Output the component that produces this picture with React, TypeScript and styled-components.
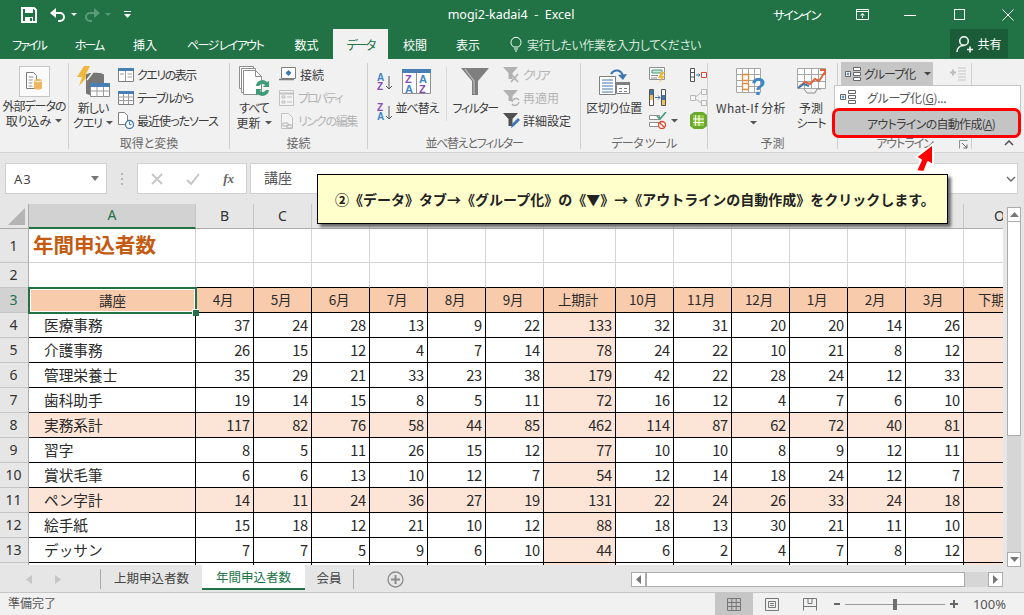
import React from 'react';
import styled, { createGlobalStyle } from 'styled-components';

const GREEN = '#217346';
const JP = '"Noto Sans CJK JP", "Noto Sans", sans-serif';

const GlobalStyle = createGlobalStyle`
    html, body { margin: 0; padding: 0; background: #e6e6e6; }
    * { box-sizing: border-box; }
`;

const App = () => (
    <Root>
        <GlobalStyle />
        <TitleBar>
            <Qat>
                <SaveIcon />
                <UndoIcon />
                <WhiteCaret />
                <RedoIcon />
                <DimCaret />
                <CustomizeIcon />
            </Qat>
            <WindowTitle>mogi2-kadai4&nbsp; - &nbsp;Excel</WindowTitle>
            <WindowControls>
                <SignIn>サインイン</SignIn>
                <WinButton $w={60}><RibbonDisplayIcon /></WinButton>
                <WinButton $w={36}><svg width="12" height="12"><path d="M0 6.500h12" stroke="#fff" /></svg></WinButton>
                <WinButton $w={64}><svg width="12" height="12"><rect x=".5" y=".5" width="10" height="10" fill="none" stroke="#fff" /></svg></WinButton>
                <WinButton $w={32}><svg width="12" height="12"><path d="M.5.500l11 11M11.500.500l-11 11" stroke="#fff" /></svg></WinButton>
            </WindowControls>
        </TitleBar>

        <TabBar>
            <RibbonTab $w={58} $ls={-2}>ファイル</RibbonTab>
            <RibbonTab $w={62} $ls={-2}>ホーム</RibbonTab>
            <RibbonTab $w={50}>挿入</RibbonTab>
            <RibbonTab $w={110} $ls={-1.6}>ページ レイアウト</RibbonTab>
            <RibbonTab $w={53}>数式</RibbonTab>
            <RibbonTab $w={55} $ls={-2} $active>データ</RibbonTab>
            <RibbonTab $w={54}>校閲</RibbonTab>
            <RibbonTab $w={52}>表示</RibbonTab>
            <TellMe>
                <BulbIcon />
                実行したい作業を入力してください
            </TellMe>
            <ShareButton>
                <PersonIcon />
                共有
            </ShareButton>
        </TabBar>

        <Ribbon>
            <Group $w={69}>
                <GroupBody>
                    <LargeButton $w={68}>
                        <IconSlot $h={35}>
                            <ExternalBox><ExternalDataIcon /></ExternalBox>
                        </IconSlot>
                        <BtnLine $ls={-1}>外部データの</BtnLine>
                        <BtnLine>取り込み<SmallCaret /></BtnLine>
                    </LargeButton>
                </GroupBody>
                <GroupLabel />
            </Group>

            <Group $w={161}>
                <GroupBody>
                    <LargeButton $w={48}>
                        <IconSlot><NewQueryIcon /></IconSlot>
                        <BtnLine $ls={-1}>新しい</BtnLine>
                        <BtnLine $ls={-1}>クエリ<SmallCaret /></BtnLine>
                    </LargeButton>
                    <SmallColumn $ml={1}>
                        <SmallRow $ls={-1.5}><ShowQueriesIcon />クエリの表示</SmallRow>
                        <SmallRow $ls={-1.7}><FromTableIcon />テーブルから</SmallRow>
                        <SmallRow $ls={-1}><RecentIcon />最近使ったソース</SmallRow>
                    </SmallColumn>
                </GroupBody>
                <GroupLabel>取得と変換</GroupLabel>
            </Group>

            <Group $w={138}>
                <GroupBody>
                    <LargeButton $w={48}>
                        <IconSlot><RefreshAllIcon /></IconSlot>
                        <BtnLine $ls={-1}>すべて</BtnLine>
                        <BtnLine>更新<SmallCaret /></BtnLine>
                    </LargeButton>
                    <SmallColumn $ml={1}>
                        <SmallRow><ConnectionsIcon />接続</SmallRow>
                        <SmallRow $ls={-2} $disabled><PropertiesIcon />プロパティ</SmallRow>
                        <SmallRow $ls={-1.3} $disabled><EditLinksIcon />リンクの編集</SmallRow>
                    </SmallColumn>
                </GroupBody>
                <GroupLabel>接続</GroupLabel>
            </Group>

            <Group $w={213}>
                <GroupBody>
                    <SortColumn>
                        <SortAzIcon top="A" bottom="Z" />
                        <SortAzIcon top="Z" bottom="A" />
                    </SortColumn>
                    <LargeButton $w={44}>
                        <IconSlot><SortIcon /></IconSlot>
                        <BtnLine $ls={-1}>並べ替え</BtnLine>
                    </LargeButton>
                    <InnerDivider />
                    <LargeButton $w={44}>
                        <IconSlot><FilterIcon /></IconSlot>
                        <BtnLine $ls={-1.5}>フィルター</BtnLine>
                    </LargeButton>
                    <SmallColumn $ml={6}>
                        <SmallRow $ls={-2} $disabled><ClearFilterIcon />クリア</SmallRow>
                        <SmallRow $disabled><ReapplyIcon />再適用</SmallRow>
                        <SmallRow><AdvancedIcon />詳細設定</SmallRow>
                    </SmallColumn>
                </GroupBody>
                <GroupLabel $ls={-1.3}>並べ替えとフィルター</GroupLabel>
            </Group>

            <Group $w={127}>
                <GroupBody>
                    <LargeButton $w={62} $ml={2}>
                        <IconSlot><TextColumnsIcon /></IconSlot>
                        <BtnLine $ls={-0.5}>区切り位置</BtnLine>
                    </LargeButton>
                    <SmallColumn $ml={4}>
                        <SmallRow><FlashFillIcon /></SmallRow>
                        <SmallRow><RemoveDupIcon /></SmallRow>
                        <SmallRow><ValidationIcon /><SmallCaret /></SmallRow>
                    </SmallColumn>
                    <SmallColumn $ml={12}>
                        <SmallRow><ConsolidateIcon /></SmallRow>
                        <SmallRow><RelationsIcon /></SmallRow>
                        <SmallRow><DataModelIcon /></SmallRow>
                    </SmallColumn>
                </GroupBody>
                <GroupLabel $ls={-0.7}>データ ツール</GroupLabel>
            </Group>

            <Group $w={130}>
                <GroupBody>
                    <LargeButton $w={80} $ml={3}>
                        <IconSlot><WhatIfIcon /></IconSlot>
                        <BtnLine $ls={0.3}>What-If 分析</BtnLine>
                        <BtnLine><SmallCaret /></BtnLine>
                    </LargeButton>
                    <LargeButton $w={40}>
                        <IconSlot><ForecastIcon /></IconSlot>
                        <BtnLine>予測</BtnLine>
                        <BtnLine $ls={-1}>シート</BtnLine>
                    </LargeButton>
                </GroupBody>
                <GroupLabel>予測</GroupLabel>
            </Group>

            <Group $w={134}>
                <GroupBody>
                    <GroupDropdown>
                        <GroupIcon />
                        グループ化
                        <DropCaret />
                    </GroupDropdown>
                    <UngroupSlot><UngroupIcon /></UngroupSlot>
                </GroupBody>
                <GroupLabel $ls={-1}>
                    アウトライン
                    <Launcher><LauncherIcon /></Launcher>
                </GroupLabel>
            </Group>

            <CollapseSlot>
                <svg width="10" height="6"><path d="M1 5l4-4 4 4" fill="none" stroke="#555" strokeWidth="1.600" /></svg>
            </CollapseSlot>

            <OutlineMenu>
                <MenuItem>
                    <GroupIcon />
                    <MenuText>グループ化(<u>G</u>)...</MenuText>
                </MenuItem>
                <MenuItemHot>アウトラインの自動作成(<u>A</u>)</MenuItemHot>
            </OutlineMenu>
        </Ribbon>

        <FormulaBar>
            <NameBox>
                A3
                <svg width="10" height="6"><path d="M1 0h8L5 5z" fill="#777" /></svg>
            </NameBox>
            <FormulaDots>
                <svg width="3" height="12"><path d="M0 0h2v2H0zM0 5h2v2H0zM0 10h2v2H0z" fill="#b4b4b4" /></svg>
            </FormulaDots>
            <FormulaButtons>
                <svg width="12" height="12"><path d="M1 1l10 10M11 1L1 11" stroke="#c6c6c6" strokeWidth="1.800" /></svg>
                <svg width="14" height="12"><path d="M1 7l4 4 8-10" fill="none" stroke="#c6c6c6" strokeWidth="2" /></svg>
                <FxText>fx</FxText>
            </FormulaButtons>
            <FormulaInput>
                <FormulaValue>講座</FormulaValue>
                <svg width="10" height="6"><path d="M1 1l4 4 4-4" fill="none" stroke="#666" strokeWidth="1.400" /></svg>
            </FormulaInput>
        </FormulaBar>

        <SheetArea>
            <Sheet>
                <Corner>
                    <svg width="17" height="17"><path d="M17 0v17H0z" fill="#b4b4b4" /></svg>
                </Corner>
                {columns.map((c, i) => (
                    <ColHead key={c} $selected={i === 0}>{c}</ColHead>
                ))}

                <RowNum>1</RowNum>
                <SheetTitle>年間申込者数</SheetTitle>
                {columns.slice(1).map((c) => <Cell key={c} $kind="blank" />)}

                <RowNum>2</RowNum>
                {columns.map((c) => <Cell key={c} $kind="blankLast" />)}

                <RowNum $selected>3</RowNum>
                <ActiveHeadCell>講座</ActiveHeadCell>
                {headers.map((h) => <Cell key={h} $kind="head" $center>{h}</Cell>)}

                {rows.map((r, ri) => (
                    <React.Fragment key={ri}>
                        <RowNum>{ri + 4}</RowNum>
                        <Cell $kind={r.sub ? 'sub' : 'data'} $indent>{r.name}</Cell>
                        {r.v.map((n, ci) => (
                            <Cell key={ci} $kind={r.sub || ci === 6 || ci === 13 ? 'sub' : 'data'}>{n}</Cell>
                        ))}
                    </React.Fragment>
                ))}
            </Sheet>
            <VScroll>
                <ScrollBtn $h={15}><svg width="9" height="5"><path d="M0 5h9L4.500 0z" fill="#777" /></svg></ScrollBtn>
                <VThumb />
                <ScrollBtn $h={15}><svg width="9" height="5"><path d="M0 0h9L4.500 5z" fill="#777" /></svg></ScrollBtn>
            </VScroll>
        </SheetArea>

        <SheetTabs>
            <TabNav>
                <svg width="6" height="9"><path d="M6 0v9L0 4.500z" fill="#c6c6c6" /></svg>
                <svg width="6" height="9"><path d="M0 0v9l6-4.500z" fill="#c6c6c6" /></svg>
            </TabNav>
            <SheetTab $w={101}>上期申込者数</SheetTab>
            <SheetTab $w={103} $active>年間申込者数</SheetTab>
            <SheetTab $w={48}>会員</SheetTab>
            <TabDivider />
            <AddSheet>
                <svg width="17" height="17">
                    <circle cx="8.500" cy="8.500" r="7.500" fill="none" stroke="#8c8c8c" strokeWidth="1.300" />
                    <path d="M8.500 4v9M4 8.500h9" stroke="#8c8c8c" strokeWidth="2" />
                </svg>
            </AddSheet>
            <HScroll>
                <HBtn><svg width="5" height="9"><path d="M5 0v9L0 4.500z" fill="#777" /></svg></HBtn>
                <HThumb />
                <HBtn><svg width="5" height="9"><path d="M0 0v9l5-4.500z" fill="#777" /></svg></HBtn>
            </HScroll>
        </SheetTabs>

        <StatusBar>
            <StatusText>準備完了</StatusText>
            <StatusRight>
                <ViewButton $active>
                    <svg width="14" height="13"><path d="M.5.500h13v12H.5zM.5 4.500h13M.5 8.500h13M4.800.500v12M9.200.500v12" fill="none" stroke="#777" /></svg>
                </ViewButton>
                <ViewButton>
                    <svg width="14" height="13"><path d="M.5.500h13v12H.5z" fill="none" stroke="#777" /><path d="M3.500 3.500h7v6h-7zM5 5.500h4M5 7.500h4" fill="none" stroke="#777" /></svg>
                </ViewButton>
                <ViewButton>
                    <svg width="14" height="13"><path d="M.5 12.500V.500h13v12M.5 8.500h13M5 .500v5h4v-5" fill="none" stroke="#777" /></svg>
                </ViewButton>
                <ZoomSign><svg width="6" height="2"><path d="M0 0h6v2H0z" fill="#666" /></svg></ZoomSign>
                <ZoomTrack><ZoomThumb /></ZoomTrack>
                <ZoomSign><svg width="8" height="8"><path d="M3 0h2v3h3v2H5v3H3V5H0V3h3z" fill="#666" /></svg></ZoomSign>
                <ZoomValue>100%</ZoomValue>
            </StatusRight>
        </StatusBar>

        <Callout>②《データ》タブ→《グループ化》の《▼》→《アウトラインの自動作成》をクリックします。</Callout>
        <PointerArrow>
            <svg width="26" height="32" viewBox="0 0 26 32">
                <path d="M22 2L5 15l5 3-5 11 8 1 4-10 5 3z" fill="#f00" stroke="#fff" strokeWidth="2" strokeLinejoin="round" />
            </svg>
        </PointerArrow>
    </Root>
);

export default App;

const columns = ['A', 'B', 'C', 'D', 'E', 'F', 'G', 'H', 'I', 'J', 'K', 'L', 'M', 'N', 'O'];
const headers = ['4月', '5月', '6月', '7月', '8月', '9月', '上期計', '10月', '11月', '12月', '1月', '2月', '3月', '下期計'];

const rows: { name: string; v: (number | string)[]; sub?: boolean }[] = [
    { name: '医療事務', v: [37, 24, 28, 13, 9, 22, 133, 32, 31, 20, 20, 14, 26, ''] },
    { name: '介護事務', v: [26, 15, 12, 4, 7, 14, 78, 24, 22, 10, 21, 8, 12, ''] },
    { name: '管理栄養士', v: [35, 29, 21, 33, 23, 38, 179, 42, 22, 28, 24, 12, 33, ''] },
    { name: '歯科助手', v: [19, 14, 15, 8, 5, 11, 72, 16, 12, 4, 7, 6, 10, ''] },
    { name: '実務系計', v: [117, 82, 76, 58, 44, 85, 462, 114, 87, 62, 72, 40, 81, ''], sub: true },
    { name: '習字', v: [8, 5, 11, 26, 15, 12, 77, 10, 10, 8, 9, 12, 11, ''] },
    { name: '賞状毛筆', v: [6, 6, 13, 10, 12, 7, 54, 12, 14, 18, 24, 12, 7, ''] },
    { name: 'ペン字計', v: [14, 11, 24, 36, 27, 19, 131, 22, 24, 26, 33, 24, 18, ''], sub: true },
    { name: '絵手紙', v: [15, 18, 12, 21, 10, 12, 88, 18, 13, 30, 21, 11, 10, ''] },
    { name: 'デッサン', v: [7, 7, 5, 9, 6, 10, 44, 6, 2, 4, 7, 8, 12, ''] },
    { name: '', v: ['', '', '', '', '', '', '', '', '', '', '', '', '', ''] },
];

// icons

const SaveIcon = () => (
    <svg width="16" height="16" style={{ marginLeft: 21 }}>
        <path d="M1 1h12l2 2v12H1z" fill="none" stroke="#fff" strokeWidth="2" />
        <path d="M4 1h8v5H4zM4 10h8v5H4z" fill="#fff" />
        <path d="M9 11h2v3H9z" fill={GREEN} />
    </svg>
);
const UndoIcon = () => (
    <svg width="16" height="14" style={{ marginLeft: 13 }}>
        <path d="M2 5h8a4 4 0 0 1 0 8H8" fill="none" stroke="#fff" strokeWidth="2" />
        <path d="M6 0v10L0 5z" fill="#fff" />
    </svg>
);
const RedoIcon = () => (
    <svg width="16" height="14" style={{ marginLeft: 7 }}>
        <path d="M14 5H6a4 4 0 0 0 0 8h2" fill="none" stroke="#5b9a78" strokeWidth="2" />
        <path d="M10 0v10l6-5z" fill="#5b9a78" />
    </svg>
);
const WhiteCaret = () => (
    <svg width="6" height="4" style={{ marginLeft: 5 }}><path d="M0 0h6L3 3z" fill="#fff" /></svg>
);
const DimCaret = () => (
    <svg width="6" height="4" style={{ marginLeft: 5 }}><path d="M0 0h6L3 3z" fill="#5b9a78" /></svg>
);
const CustomizeIcon = () => (
    <svg width="7" height="7" style={{ marginLeft: 13 }}><path d="M0 0h7v1H0zM0 3h7L3.500 7z" fill="#fff" /></svg>
);
const RibbonDisplayIcon = () => (
    <svg width="13" height="11">
        <path d="M.5.500h12v10H.5zM.5 2.500h12" fill="none" stroke="#fff" />
        <path d="M6.500 4L4 6.500h5zM6 6h1v3H6z" fill="#fff" />
    </svg>
);
const BulbIcon = () => (
    <svg width="12" height="16" style={{ marginRight: 5 }}>
        <path d="M3.500 11C2 9.500 1 8.500 1 6.300a5 5 0 0 1 10 0c0 2.200-1 3.200-2.500 4.700zM4 13h4M5 15h2" fill="none" stroke="#fff" />
    </svg>
);
const PersonIcon = () => (
    <svg width="17" height="18" style={{ marginRight: 4 }}>
        <circle cx="8" cy="6" r="4.300" fill="none" stroke="#fff" strokeWidth="1.500" />
        <path d="M1 17c0-4 3-6.500 7-6.500M11 14.500h6M14 11.500v6" fill="none" stroke="#fff" strokeWidth="1.500" />
    </svg>
);
const SmallCaret = () => (
    <CaretSvg width="7" height="4"><path d="M0 0h7L3.500 3.500z" fill="#555" /></CaretSvg>
);
const DropCaret = () => (
    <CaretSvg width="7" height="4" style={{ marginLeft: 9 }}><path d="M0 0h7L3.500 3.500z" fill="#444" /></CaretSvg>
);
const ExternalDataIcon = () => (
    <svg width="18" height="20">
        <path d="M1.500 1.500h7l3 3v13h-10z" fill="#fff" stroke="#7a7a7a" />
        <path d="M3.500 6h5M3.500 9h4M3.500 12h4M3.500 15h4" stroke="#8f8f8f" />
        <path d="M9 9.500c0-2 8-2 8 0V17c0 2-8 2-8 0z" fill="#efb560" />
        <path d="M9 9.500c0 1.500 8 1.500 8 0" fill="none" stroke="#fff" />
    </svg>
);
const NewQueryIcon = () => (
    <svg width="34" height="32">
        <path d="M8 0h6l-4 8h4L3 20l3-9H1z" fill="#f0b73e" />
        <path d="M10 9c0-3 18-3 18 0v18c0 3-18 3-18 0z" fill="#767676" />
        <path d="M11 14L17 6" stroke="#f1f1f1" strokeWidth="1.500" />
        <path d="M14.500 17.500h19v13h-19z" fill="#fff" stroke="#8a8a8a" />
        <path d="M14 17h20v4H14z" fill="#4a7fb5" />
        <path d="M14.500 25h19M21 21v10M27.500 21v10" stroke="#9c9c9c" />
    </svg>
);
const ShowQueriesIcon = () => (
    <SmallIcon width="16" height="15">
        <path d="M.5 1.500h15v13H.5z" fill="#fff" stroke="#7f7f7f" />
        <path d="M0 1h16v3H0z" fill="#4a7fb5" />
        <path d="M7.500 4v10M9.500 7h4.500M9.500 10h4.500M2 7h4" stroke="#9c9c9c" />
    </SmallIcon>
);
const FromTableIcon = () => (
    <SmallIcon width="16" height="15">
        <path d="M.5 1.500h15v13H.5z" fill="#fff" stroke="#7f7f7f" />
        <path d="M0 1h16v3H0z" fill="#4a7fb5" />
        <path d="M.5 7h15M.5 10.500h15M5.500 4v10M10.500 4v10" stroke="#9c9c9c" />
    </SmallIcon>
);
const RecentIcon = () => (
    <SmallIcon width="16" height="17">
        <path d="M.5.500h6l3 3v9h-9z" fill="#fff" stroke="#7f7f7f" />
        <circle cx="11.500" cy="12.500" r="4" fill="#fff" stroke="#3e77b0" strokeWidth="1.300" />
        <path d="M11.500 10v2.700h2" fill="none" stroke="#3e77b0" />
    </SmallIcon>
);
const RefreshAllIcon = () => (
    <svg width="31" height="32">
        <path d="M.5.500h14v22H.5z" fill="#fff" stroke="#8f8f8f" />
        <path d="M2.500 2.500h14v24h-14z" fill="#fff" stroke="#8f8f8f" />
        <path d="M4.500 4.500h12l6 6v18h-18z" fill="#fff" stroke="#8f8f8f" />
        <path d="M16.500 4.500v6h6" fill="none" stroke="#8f8f8f" />
        <path d="M17 20a6.500 6.500 0 0 1 11-4l2-1v6h-6l2-2a3.800 3.800 0 0 0-6 1zM30 24a6.500 6.500 0 0 1-11 4l-2 1v-6h6l-2 2a3.800 3.800 0 0 0 6-1z" fill="#3f9c7b" />
    </svg>
);
const ConnectionsIcon = () => (
    <SmallIcon width="18" height="15">
        <path d="M2.500.500h14v11h-14z" fill="#fff" stroke="#7f7f7f" />
        <path d="M9.500 3l3 3-3 3-3-3z" fill="#3e77b0" />
        <path d="M0 12.500h15" stroke="#7f7f7f" strokeWidth="1.500" />
    </SmallIcon>
);
const PropertiesIcon = () => (
    <SmallIcon width="16" height="16">
        <path d="M.5.500h14v15H.5z" fill="#f4f4f4" stroke="#c2c2c2" />
        <path d="M.5 3.500h14" stroke="#c2c2c2" strokeWidth="2" />
        <path d="M3 6h3v2H3zM3 11h3v2H3zM8 7h5M8 12h5" fill="none" stroke="#bcbcbc" />
    </SmallIcon>
);
const EditLinksIcon = () => (
    <SmallIcon width="16" height="16">
        <path d="M2.500.500h7l4 4v11h-11z" fill="#f4f4f4" stroke="#c2c2c2" />
        <path d="M5 10h3a1.500 1.500 0 0 1 0 3H5a1.500 1.500 0 0 1 0-3zM9 12h3a1.500 1.500 0 0 1 0 3H9a1.500 1.500 0 0 1 0-3z" fill="#f1f1f1" stroke="#b0b0b0" />
    </SmallIcon>
);
const SortAzIcon = ({ top, bottom }: { top: string; bottom: string }) => (
    <svg width="16" height="18">
        <SvgLetter x="0" y="8" $fill={top === 'A' ? '#3e86c4' : '#8a4bb0'}>{top}</SvgLetter>
        <SvgLetter x="0" y="17" $fill={bottom === 'A' ? '#3e86c4' : '#8a4bb0'}>{bottom}</SvgLetter>
        <path d="M12 3v13M9 13l3 3 3-3" fill="none" stroke="#555" />
    </svg>
);
const SortIcon = () => (
    <svg width="30" height="27">
        <path d="M.5 1.500h28v24H.5zM14.500 4v21" fill="#fff" stroke="#8f8f8f" />
        <path d="M0 1h29v4H0z" fill="#4a7fb5" />
        <SvgLetter x="3" y="15" $fill="#8a4bb0" $big>Z</SvgLetter>
        <SvgLetter x="3" y="25" $fill="#3e86c4" $big>A</SvgLetter>
        <SvgLetter x="17" y="15" $fill="#3e86c4" $big>A</SvgLetter>
        <SvgLetter x="17" y="25" $fill="#8a4bb0" $big>Z</SvgLetter>
    </svg>
);
const FilterIcon = () => (
    <svg width="28" height="27">
        <path d="M0 0h28L17 13v14h-6V13z" fill="#7f7f7f" />
        <path d="M4 1l9 12v13" fill="none" stroke="#bdbdbd" strokeWidth="1.200" />
    </svg>
);
const ClearFilterIcon = () => (
    <SmallIcon width="17" height="16">
        <path d="M0 0h15L9.500 6v6h-4V6z" fill="#b2b2b2" />
        <path d="M8 7l7 8M15 7l-7 8" stroke="#b2b2b2" strokeWidth="1.800" />
    </SmallIcon>
);
const ReapplyIcon = () => (
    <SmallIcon width="17" height="16">
        <path d="M0 0h15L9.500 6v5h-4V6z" fill="#b2b2b2" />
        <path d="M9 12a4 4 0 0 1 7-2M16 12a4 4 0 0 1-7 2" fill="none" stroke="#b2b2b2" strokeWidth="1.500" />
    </SmallIcon>
);
const AdvancedIcon = () => (
    <SmallIcon width="17" height="16">
        <path d="M0 0h15L9.500 6v7h-4V6z" fill="#505050" />
        <path d="M8 15l1-4 6-6 2 2-6 6z" fill="#3e77b0" />
    </SmallIcon>
);
const TextColumnsIcon = () => (
    <svg width="31" height="26">
        <path d="M.5 7.500h16v18H.5z" fill="#fff" stroke="#7f7f7f" />
        <path d="M3 11h11M3 14h11M3 17h11M3 20h11M3 23h11" stroke="#3e77b0" />
        <path d="M17.500 13.500h13v11h-13z" fill="#fff" stroke="#7f7f7f" />
        <path d="M17 13h14v3H17z" fill="#7f7f7f" />
        <path d="M20 19h3v1h-3zM25 19h3v1h-3zM20 22h3v1h-3zM25 22h3v1h-3z" fill="#7f7f7f" />
        <path d="M12 5c3-5 10-5 12 2" fill="none" stroke="#3e77b0" strokeWidth="2" />
        <path d="M19 6l5 5 4-6z" fill="#3e77b0" />
    </svg>
);
const FlashFillIcon = () => (
    <svg width="17" height="16">
        <path d="M.5.500h15v12H.5z" fill="#fff" stroke="#8f8f8f" />
        <path d="M3 3h10v3H3z" fill="#cfe5d5" stroke="#3f9c7b" />
        <path d="M2 8.500h7M2 11h6" stroke="#8f8f8f" />
        <path d="M12 5h4l-3 4h3l-6 7 2-5H9z" fill="#f0b73e" />
    </svg>
);
const RemoveDupIcon = () => (
    <svg width="17" height="17">
        <path d="M.5.500h4v16h-4zM12.500.500h4v16h-4z" fill="#fff" stroke="#555" />
        <path d="M1 1h3v5H1zM13 6h3v5h-3z" fill="#3e77b0" />
        <path d="M1 6h3v5H1zM13 11h3v5h-3z" fill="#f0c35e" />
        <path d="M6 8.500h5M9 6.500l2 2-2 2" fill="none" stroke="#3e77b0" />
    </svg>
);
const ValidationIcon = () => (
    <svg width="18" height="17">
        <path d="M.5 3.500h10v4H.5zM.5 10.500h10v4H.5z" fill="#fff" stroke="#8f8f8f" />
        <path d="M8 4l3 3 6-7" fill="none" stroke="#3f9c7b" strokeWidth="1.600" />
        <circle cx="13" cy="13" r="3.500" fill="#fff" stroke="#d9482f" strokeWidth="1.300" />
        <path d="M10.500 10.500l5 5" stroke="#d9482f" strokeWidth="1.300" />
    </svg>
);
const ConsolidateIcon = () => (
    <svg width="17" height="14">
        <path d="M.5.500h4v13h-4zM.5 4.500h4M.5 9h4" fill="#fff" stroke="#555" />
        <path d="M6 7h4M8.500 5.500L10 7 8.500 8.500" fill="none" stroke="#3e77b0" />
        <path d="M11.500 4.500h5v5h-5z" fill="#fff" stroke="#d9482f" />
    </svg>
);
const RelationsIcon = () => (
    <svg width="17" height="17">
        <path d="M.5 6.500h5v5h-5zM11.500.500h5v5h-5zM11.500 11.500h5v5h-5z" fill="#f4f4f4" stroke="#b8b8b8" />
        <path d="M5.500 8l6-5M5.500 10l6 4" stroke="#b8b8b8" />
    </svg>
);
const DataModelIcon = () => (
    <svg width="17" height="17">
        <path d="M4 0h9l4 3v11l-4 3H4l-4-3V3z" fill="#6aa82f" />
        <path d="M3 3h11v11H3z" fill="#8dc63f" />
        <path d="M5.500 3v11M9 3v11M3 7h11M3 10.500h11" stroke="#fff" />
    </svg>
);
const WhatIfIcon = () => (
    <svg width="31" height="27">
        <path d="M.5.500h24v24H.5zM.5 6.500h24M.5 12.500h24M.5 18.500h24M6.500.500v24M12.500.500v24M18.500.500v24" fill="#fff" stroke="#a6a6a6" />
        <path d="M6.500 6.500h6v6h-6zM6.500 15.500h6v6h-6z" fill="#fff" stroke="#e48a3c" strokeWidth="1.300" />
        <QuestionMark x="15" y="27">?</QuestionMark>
    </svg>
);
const ForecastIcon = () => (
    <svg width="29" height="27">
        <path d="M.5.500h28v20H.5zM.5 6.500h28M.5 13.500h28M7.500.500v20M14.500.500v20M21.500.500v20" fill="#fff" stroke="#a6a6a6" />
        <path d="M2 19l6-5 5 2 5-5 4 2 6-9" fill="none" stroke="#e0653c" strokeWidth="2" />
        <path d="M23 2h5v5" fill="none" stroke="#e0653c" strokeWidth="2" />
        <path d="M1 20l6-4 5 2" fill="none" stroke="#3e77b0" strokeWidth="2" />
        <path d="M7 21l3 4h8l2-4h4" fill="none" stroke="#8f8f8f" />
    </svg>
);
const GroupIcon = () => (
    <svg width="16" height="16" style={{ flex: 'none', marginRight: 3 }}>
        <path d="M.5 5.500h5v5h-5z" fill="#fff" stroke="#666" />
        <path d="M1.500 8h3M3 6.500v3" stroke="#3e77b0" />
        <path d="M8.500 1.500h7v3h-7zM8.500 6.500h7v3h-7zM8.500 11.500h7v3h-7z" fill="#fff" stroke="#666" />
    </svg>
);
const UngroupIcon = () => (
    <svg width="16" height="14">
        <path d="M0 5.500h6M3 2.500v6" stroke="#bdbdbd" strokeWidth="2" />
        <path d="M8 1h8M8 4h8M8 7h8M8 10h8M8 13h8" stroke="#c6c6c6" />
    </svg>
);
const LauncherIcon = () => (
    <svg width="9" height="9">
        <path d="M.5.500h8M.5.500v8" fill="none" stroke="#8f8f8f" />
        <path d="M3 3l5 5M8 4.500V8H4.500" fill="none" stroke="#666" />
    </svg>
);

// styles

const Root = styled.div`
    position: relative;
    width: 1024px;
    height: 615px;
    overflow: hidden;
    font-family: ${JP};
    background: #e6e6e6;
`;

const TitleBar = styled.div`
    display: grid;
    grid-template-columns: 1fr auto 1fr;
    align-items: center;
    height: 29px;
    background: ${GREEN};
    color: #fff;
`;

const Qat = styled.div`
    display: flex;
    align-items: center;
`;

const WindowTitle = styled.div`
    font-family: "Noto Sans", sans-serif;
    font-size: 12.5px;
    transform: translateX(-1px);
`;

const WindowControls = styled.div`
    display: flex;
    align-items: center;
    justify-content: flex-end;
`;

const SignIn = styled.div`
    font-size: 12px;
    font-feature-settings: "palt";
    letter-spacing: -1.4px;
    margin-right: 12px;
`;

const WinButton = styled.div<{ $w: number }>`
    display: flex;
    justify-content: center;
    width: ${(p) => p.$w}px;
`;

const TabBar = styled.div`
    display: flex;
    height: 30px;
    background: ${GREEN};
    color: #fff;
`;

const RibbonTab = styled.div<{ $w: number; $active?: boolean; $ls?: number }>`
    display: flex;
    align-items: center;
    justify-content: center;
    width: ${(p) => p.$w}px;
    font-size: 12px;
    font-feature-settings: "palt";
    letter-spacing: ${(p) => p.$ls ?? 0}px;
    white-space: nowrap;
    background: ${(p) => (p.$active ? '#f1f1f1' : 'transparent')};
    color: ${(p) => (p.$active ? GREEN : '#fff')};
`;

const TellMe = styled.div`
    display: flex;
    align-items: center;
    margin-left: 16px;
    font-size: 12px;
    font-feature-settings: "palt";
    letter-spacing: -0.3px;
    color: #d8e8df;
`;

const ShareButton = styled.div`
    display: flex;
    align-items: center;
    justify-content: center;
    margin-left: auto;
    margin-right: 16px;
    width: 58px;
    height: 29px;
    background: #1a5c38;
    font-size: 12px;
`;

const Ribbon = styled.div`
    position: relative;
    display: flex;
    height: 94px;
    padding-top: 4px;
    background: #f1f1f1;
    border-bottom: 1px solid #d4d4d4;
    color: #3c3c3c;
    font-size: 12px;
    font-feature-settings: "palt";
`;

const Group = styled.div<{ $w: number }>`
    position: relative;
    display: flex;
    flex-direction: column;
    flex: none;
    width: ${(p) => p.$w}px;
    height: 86px;
    border-right: 1px solid #cfcfcf;
`;

const GroupBody = styled.div`
    display: flex;
    height: 72px;
`;

const GroupLabel = styled.div<{ $ls?: number }>`
    height: 14px;
    line-height: 14px;
    padding-top: 1px;
    text-align: center;
    color: #6a6a6a;
    white-space: nowrap;
    letter-spacing: ${(p) => p.$ls ?? 0}px;
`;

const LargeButton = styled.div<{ $w: number; $ml?: number }>`
    display: flex;
    flex-direction: column;
    align-items: center;
    flex: none;
    width: ${(p) => p.$w}px;
    margin-left: ${(p) => p.$ml ?? 0}px;
`;

const IconSlot = styled.div<{ $h?: number }>`
    display: flex;
    align-items: center;
    justify-content: center;
    height: ${(p) => p.$h ?? 37}px;
`;

const ExternalBox = styled.div`
    display: flex;
    align-items: center;
    justify-content: center;
    width: 31px;
    height: 31px;
    margin-top: 1px;
    background: #fbfbfb;
    border: 1px solid #c6c6c6;
`;

const BtnLine = styled.div<{ $ls?: number }>`
    display: flex;
    align-items: center;
    height: 15px;
    line-height: 15px;
    white-space: nowrap;
    letter-spacing: ${(p) => p.$ls ?? 0}px;
`;

const CaretSvg = styled.svg`
    flex: none;
    margin-left: 4px;
`;

const SmallColumn = styled.div<{ $ml?: number }>`
    display: flex;
    flex-direction: column;
    margin-left: ${(p) => p.$ml ?? 0}px;
`;

const SmallRow = styled.div<{ $disabled?: boolean; $ls?: number }>`
    display: flex;
    align-items: center;
    height: 23px;
    white-space: nowrap;
    letter-spacing: ${(p) => p.$ls ?? 0}px;
    color: ${(p) => (p.$disabled ? '#b4b4b4' : 'inherit')};
`;

const SmallIcon = styled.svg`
    flex: none;
    margin-right: 3px;
`;

const SortColumn = styled.div`
    display: flex;
    flex-direction: column;
    gap: 12px;
    width: 27px;
    padding: 10px 0 0 9px;
`;

const InnerDivider = styled.div`
    width: 1px;
    height: 54px;
    margin: 4px 6px 0 7px;
    background: #d8d8d8;
`;

const SvgLetter = styled.text<{ $fill: string; $big?: boolean }>`
    font-family: "Liberation Sans", sans-serif;
    font-weight: bold;
    font-size: ${(p) => (p.$big ? 11 : 10)}px;
    fill: ${(p) => p.$fill};
`;

const QuestionMark = styled.text`
    font-family: "Liberation Sans", sans-serif;
    font-weight: bold;
    font-size: 24px;
    fill: #3e86c4;
`;

const GroupDropdown = styled.div`
    display: flex;
    align-items: center;
    flex: none;
    height: 23px;
    margin: -1px 0 0 3px;
    padding-left: 4px;
    width: 92px;
    background: #c6c6c6;
    white-space: nowrap;
    letter-spacing: -1px;
`;

const UngroupSlot = styled.div`
    margin: 4px 0 0 17px;
`;

const Launcher = styled.span`
    position: absolute;
    right: 3px;
    bottom: 0;
    line-height: 0;
`;

const CollapseSlot = styled.div`
    display: flex;
    align-items: flex-end;
    justify-content: flex-end;
    flex: 1;
    padding: 0 10px 2px 0;
    height: 85px;
`;

const OutlineMenu = styled.div`
    position: absolute;
    left: 834px;
    top: 26px;
    width: 187px;
    height: 50px;
    background: #fff;
    border: 1px solid #c6c6c6;
    color: #3c3c3c;
`;

const MenuItem = styled.div`
    display: flex;
    align-items: center;
    height: 22px;
    padding-left: 5px;
`;

const MenuText = styled.span`
    margin-left: 8px;
    font-size: 12px;
    letter-spacing: -0.3px;
    color: #555;
`;

const MenuItemHot = styled.div`
    display: flex;
    align-items: center;
    height: 30px;
    margin: 0 -1px 0 -3px;
    padding-left: 32px;
    background: #c4c4c4;
    border: 3px solid #f00;
    border-radius: 7px;
    font-size: 12px;
    letter-spacing: -0.7px;
    white-space: nowrap;
`;

const FormulaBar = styled.div`
    display: flex;
    height: 51px;
    padding: 10px 6px 0 5px;
    background: #e6e6e6;
`;

const NameBox = styled.div`
    display: flex;
    align-items: center;
    justify-content: space-between;
    width: 102px;
    height: 31px;
    padding: 0 6px 0 8px;
    background: #fff;
    border: 1px solid #d0d0d0;
    color: #444;
    font-family: "Noto Sans", sans-serif;
    font-size: 13px;
    letter-spacing: 1px;
`;

const FormulaDots = styled.div`
    display: flex;
    align-items: center;
    justify-content: center;
    width: 30px;
    height: 31px;
`;

const FormulaButtons = styled.div`
    display: flex;
    align-items: center;
    justify-content: space-between;
    width: 110px;
    height: 31px;
    padding: 0 12px 0 13px;
    background: #fff;
    border: 1px solid #d0d0d0;
`;

const FxText = styled.span`
    font-family: "Liberation Serif", serif;
    font-style: italic;
    font-weight: bold;
    font-size: 13px;
    color: #666;
`;

const FormulaInput = styled.div`
    display: flex;
    align-items: center;
    justify-content: space-between;
    flex: 1;
    height: 31px;
    margin-left: 3px;
    padding: 0 1px 0 13px;
    background: #fff;
    border: 1px solid #d0d0d0;
    color: #555;
    font-size: 14px;
`;

const FormulaValue = styled.span`
    padding-bottom: 3px;
`;

const SheetArea = styled.div`
    display: flex;
    height: 361px;
`;

const Sheet = styled.div`
    display: grid;
    grid-template-columns: 29px 167px repeat(6, 58px) 72px repeat(6, 58px) 72px;
    grid-template-rows: 25px 34px repeat(12, 25px);
    flex: none;
    width: 1003px;
    height: 361px;
    overflow: hidden;
    background: #fff;
`;

const Corner = styled.div`
    display: flex;
    align-items: flex-end;
    justify-content: flex-end;
    padding: 0 3px 3px 0;
    background: #e6e6e6;
    border-bottom: 1px solid #ababab;
    border-right: 1px solid #ababab;
`;

const ColHead = styled.div<{ $selected?: boolean }>`
    display: flex;
    align-items: center;
    justify-content: center;
    padding-bottom: 2px;
    font-family: "Noto Sans", sans-serif;
    font-size: 14px;
    background: ${(p) => (p.$selected ? '#d2d2d2' : '#e6e6e6')};
    color: ${(p) => (p.$selected ? GREEN : '#333')};
    border-right: 1px solid #c6c6c6;
    border-bottom: ${(p) => (p.$selected ? `2px solid ${GREEN}` : '1px solid #ababab')};
`;

const RowNum = styled.div<{ $selected?: boolean }>`
    display: flex;
    align-items: center;
    justify-content: center;
    padding: 0 1px 1px 0;
    font-family: "Noto Sans", sans-serif;
    font-size: 14px;
    color: ${(p) => (p.$selected ? GREEN : '#333')};
    background: ${(p) => (p.$selected ? '#d2d2d2' : '#e6e6e6')};
    border-right: 1px solid #ababab;
    border-bottom: 1px solid #c6c6c6;
`;

const cellStyles = {
    blank: { bg: '#fff', line: '#d4d4d4', bottom: '#d4d4d4' },
    blankLast: { bg: '#fff', line: '#d4d4d4', bottom: '#000' },
    head: { bg: '#f8cbad', line: '#000', bottom: '#000' },
    data: { bg: '#fff', line: '#000', bottom: '#000' },
    sub: { bg: '#fce4d6', line: '#000', bottom: '#000' },
};

const Cell = styled.div<{ $kind: keyof typeof cellStyles; $center?: boolean; $indent?: boolean }>`
    display: flex;
    align-items: center;
    justify-content: ${(p) => (p.$center ? 'center' : p.$indent ? 'flex-start' : 'flex-end')};
    padding: ${(p) => (p.$indent ? '0 0 2px 15px' : '0 3px 2px 0')};
    font-size: ${(p) => (p.$center ? 13.5 : 14.67)}px;
    letter-spacing: ${(p) => (p.$indent ? 0 : -0.2)}px;
    color: #2a2a2a;
    white-space: nowrap;
    background: ${(p) => cellStyles[p.$kind].bg};
    border-right: 1px solid ${(p) => cellStyles[p.$kind].line};
    border-bottom: 1px solid ${(p) => cellStyles[p.$kind].bottom};
`;

const SheetTitle = styled.div`
    display: flex;
    align-items: center;
    padding: 0 0 3px 4px;
    font-size: 20.5px;
    font-weight: bold;
    color: #c55a11;
    white-space: nowrap;
    border-right: 1px solid #d4d4d4;
    border-bottom: 1px solid #d4d4d4;
`;

const ActiveHeadCell = styled.div`
    position: relative;
    display: flex;
    align-items: center;
    justify-content: center;
    padding-bottom: 2px;
    font-size: 13.5px;
    color: #2a2a2a;
    background: #f8cbad;
    outline: 2px solid ${GREEN};
    outline-offset: -1px;
    box-shadow: inset 0 0 0 2px #fff;
    z-index: 1;

    &::after {
        content: '';
        position: absolute;
        right: -3px;
        bottom: -3px;
        width: 6px;
        height: 6px;
        background: ${GREEN};
        border: 1px solid #fff;
        border-width: 1px 0 0 1px;
    }
`;

const VScroll = styled.div`
    display: flex;
    flex-direction: column;
    width: 14px;
    height: 360px;
    margin: 3px 0 0 4px;
    background: #d6d6d6;
`;

const ScrollBtn = styled.div<{ $h: number }>`
    display: flex;
    align-items: center;
    justify-content: center;
    flex: none;
    height: ${(p) => p.$h}px;
    background: #fff;
    border: 1px solid #ababab;
`;

const VThumb = styled.div`
    height: 214px;
    margin-bottom: auto;
    background: #fff;
    border: 1px solid #ababab;
    border-top: none;
`;

const SheetTabs = styled.div`
    display: flex;
    align-items: flex-start;
    height: 28px;
    background: #e6e6e6;
    border-bottom: 1px solid #c6c6c6;
`;

const TabNav = styled.div`
    display: flex;
    align-items: center;
    flex: none;
    gap: 23px;
    width: 101px;
    height: 20px;
    margin-top: 4px;
    padding-left: 26px;
    border-right: 1px solid #ababab;
`;

const SheetTab = styled.div<{ $w: number; $active?: boolean }>`
    display: flex;
    align-items: center;
    justify-content: center;
    flex: none;
    width: ${(p) => p.$w}px;
    height: 25px;
    font-size: 12.5px;
    color: ${(p) => (p.$active ? GREEN : '#444')};
    background: ${(p) => (p.$active ? '#fff' : 'transparent')};
    border-bottom: ${(p) => (p.$active ? `2px solid ${GREEN}` : 'none')};
`;

const TabDivider = styled.div`
    width: 1px;
    height: 20px;
    margin-top: 4px;
    background: #ababab;
`;

const AddSheet = styled.div`
    margin: 6px 0 0 33px;
    line-height: 0;
`;

const HScroll = styled.div`
    display: flex;
    width: 372px;
    height: 15px;
    margin: 7px 21px 0 auto;
    background: #d6d6d6;
`;

const HBtn = styled.div`
    display: flex;
    align-items: center;
    justify-content: center;
    width: 15px;
    background: #fff;
    border: 1px solid #ababab;
`;

const HThumb = styled.div`
    width: 319px;
    margin-right: auto;
    background: #fff;
    border: 1px solid #ababab;
`;

const StatusBar = styled.div`
    display: flex;
    align-items: center;
    height: 22px;
    padding-left: 8px;
    background: #f1f1f1;
    color: #555;
    font-size: 12px;
`;

const StatusText = styled.span`
    padding-bottom: 3px;
`;

const StatusRight = styled.div`
    display: flex;
    align-items: center;
    height: 22px;
    margin-left: auto;
    padding-right: 18px;
`;

const ViewButton = styled.div<{ $active?: boolean }>`
    display: flex;
    align-items: center;
    justify-content: center;
    width: 38px;
    height: 22px;
    background: ${(p) => (p.$active ? '#c6c6c6' : 'transparent')};
`;

const ZoomSign = styled.div`
    display: flex;
    align-items: center;
    justify-content: center;
    width: 16px;
`;

const ZoomTrack = styled.div`
    display: flex;
    align-items: center;
    justify-content: center;
    width: 100px;
    height: 1px;
    margin: 0 1px 0 0;
    background: #9a9a9a;
`;

const ZoomThumb = styled.div`
    flex: none;
    width: 4px;
    height: 11px;
    background: #6f6f6f;
`;

const ZoomValue = styled.div`
    margin-left: 11px;
    font-family: "Noto Sans", sans-serif;
    font-size: 13px;
    color: #555;
`;

const Callout = styled.div`
    position: absolute;
    left: 317px;
    top: 174px;
    display: flex;
    align-items: center;
    width: 631px;
    height: 50px;
    padding-left: 17px;
    background: #ffffcc;
    border: 1px solid #000;
    box-shadow: 3px 3px 3px #666;
    color: #222;
    font-size: 14px;
    font-weight: bold;
    white-space: nowrap;
`;

const PointerArrow = styled.div`
    position: absolute;
    left: 911px;
    top: 142px;
    line-height: 0;
`;
